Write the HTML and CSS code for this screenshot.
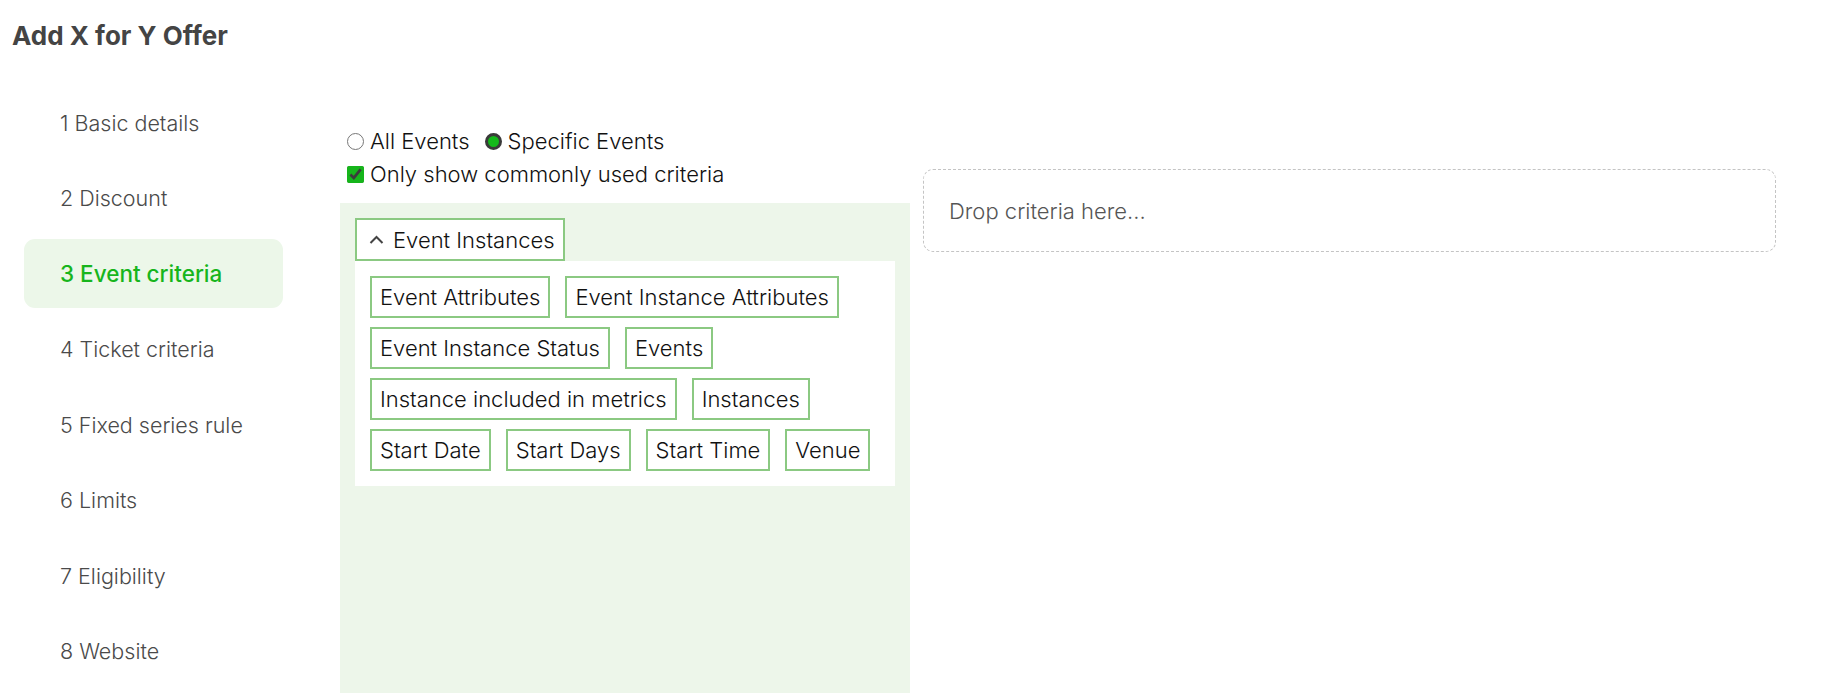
FILE: index.html
```html
<!DOCTYPE html>
<html lang="en">
<head>
<meta charset="utf-8">
<title>Add X for Y Offer</title>
<link rel="stylesheet" href="styles.css">
</head>
<body>
<header class="page-header">
  <h1 class="page-title">Add X for Y Offer</h1>
</header>
<div class="layout">
  <nav class="steps">
    <a class="step">1 Basic details</a>
    <a class="step">2 Discount</a>
    <a class="step step-active">3 Event criteria</a>
    <a class="step">4 Ticket criteria</a>
    <a class="step">5 Fixed series rule</a>
    <a class="step">6 Limits</a>
    <a class="step">7 Eligibility</a>
    <a class="step">8 Website</a>
  </nav>
  <main class="editor">
    <section class="palette">
      <div class="options">
        <div class="option-row">
          <label class="option"><input type="radio" name="scope" class="radio"> All Events</label>
          <label class="option"><input type="radio" name="scope" class="radio" checked> Specific Events</label>
        </div>
        <div class="option-row">
          <label class="option"><input type="checkbox" class="check" checked> Only show commonly used criteria</label>
        </div>
      </div>
      <div class="groups">
        <button class="group-toggle" type="button">
          <svg class="chevron" width="15" height="9" viewBox="0 0 15 9"><path d="M1.5 8 L7.5 2 L13.5 8" fill="none" stroke="#444" stroke-width="2"/></svg>
          <span>Event Instances</span>
        </button>
        <div class="group-body">
          <span class="tag">Event Attributes</span>
          <span class="tag">Event Instance Attributes</span>
          <span class="tag">Event Instance Status</span>
          <span class="tag">Events</span>
          <span class="tag">Instance included in metrics</span>
          <span class="tag">Instances</span>
          <span class="tag">Start Date</span>
          <span class="tag">Start Days</span>
          <span class="tag">Start Time</span>
          <span class="tag">Venue</span>
        </div>
      </div>
    </section>
    <section class="dropzone">
      <div class="drop-box">Drop criteria here...</div>
    </section>
  </main>
</div>
</body>
</html>
```
FILE: styles.css
```css
* { box-sizing: border-box; }

body {
  margin: 0;
  font-family: Inter, "Liberation Sans", sans-serif;
  color: #111;
  background: #fff;
}

.page-header {
  padding: 20px 12px 0;
}

.page-title {
  margin: 0;
  font-size: 26px;
  line-height: 32px;
  font-weight: 700;
  color: #444;
}

.layout {
  display: flex;
  padding-left: 24px;
  padding-top: 36px;
}

.steps {
  width: 259px;
  display: flex;
  flex-direction: column;
  gap: 6.5px;
  flex-shrink: 0;
}

.step {
  display: flex;
  align-items: center;
  height: 69px;
  padding-left: 36px;
  font-size: 21.5px;
  font-weight: 350;
  color: #4a4a4a;
  border-radius: 11px;
}

.step-active {
  background: #ecf7e9;
  color: #17b51c;
  font-weight: 500;
  font-size: 22.5px;
}

.editor {
  flex: 1;
  display: flex;
  gap: 13px;
  margin-left: 57px;
  margin-right: 46px;
}

.palette {
  width: 570px;
  flex-shrink: 0;
  display: flex;
  flex-direction: column;
}

.options {
  padding: 41px 0 17px 7px;
  display: flex;
  flex-direction: column;
  gap: 9px;
  font-size: 22px;
  font-weight: 350;
}

.option-row {
  display: flex;
  gap: 15px;
  line-height: 24px;
}

.option {
  display: flex;
  align-items: center;
  gap: 6px;
}

.radio {
  appearance: none;
  margin: 0;
  width: 17px;
  height: 17px;
  border: 1.5px solid #777;
  border-radius: 50%;
  background: #fff;
}

.radio:checked {
  border: 3px solid #3a3a3a;
  background: #14b81a;
}

.check {
  margin: 0;
  width: 17px;
  height: 17px;
  accent-color: #16b51b;
}

.groups {
  background: #edf6ea;
  padding: 15px;
  min-height: 490px;
}

.group-toggle {
  display: flex;
  align-items: center;
  gap: 9px;
  height: 43px;
  padding: 0 8px 0 12px;
  background: #fff;
  border: 2px solid #8bc982;
  font: inherit;
  font-size: 22px;
  font-weight: 350;
  color: #111;
}

.chevron {
  display: block;
}

.group-body {
  background: #fff;
  padding: 15px;
  display: flex;
  flex-wrap: wrap;
  gap: 9px 15px;
}

.tag {
  display: inline-flex;
  align-items: center;
  height: 42px;
  padding: 0 8px;
  border: 2px solid #8bc982;
  font-size: 22px;
  font-weight: 350;
  color: #111;
}

.dropzone {
  flex: 1;
}

.drop-box {
  margin-top: 81px;
  height: 83px;
  display: flex;
  align-items: center;
  padding-left: 25px;
  border: 1px dashed #c4c4c4;
  border-radius: 10px;
  font-size: 22px;
  font-weight: 350;
  color: #555;
}
```
